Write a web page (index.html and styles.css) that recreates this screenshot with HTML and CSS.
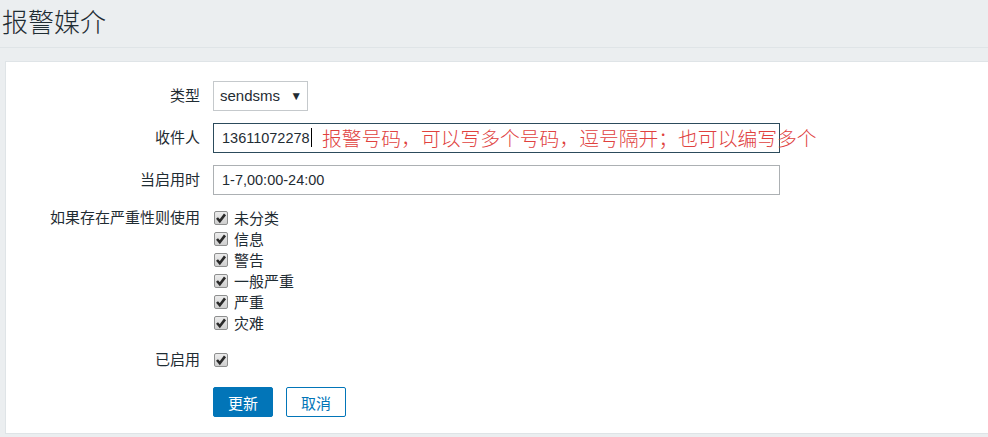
FILE: index.html
```html
<!DOCTYPE html>
<html lang="zh-CN">

<head>
    <meta charset="UTF-8">
    <title>报警媒介</title>
    <link rel="stylesheet" href="styles.css">
</head>

<body>
    <header class="header">
        <h1>报警媒介</h1>
    </header>

    <div class="panel">
        <form class="form" action="#" method="post">
            <label class="form-label">类型</label>
            <div class="form-field">
                <div class="select">sendsms <span class="select-arrow">▼</span></div>
            </div>

            <label class="form-label">收件人</label>
            <div class="form-field field-note">
                <div class="input input-focus">13611072278<span class="caret"></span></div>
                <!-- 截图上的红色批注 -->
                <span class="note">报警号码，可以写多个号码，逗号隔开；也可以编写多个</span>
            </div>

            <label class="form-label">当启用时</label>
            <div class="form-field">
                <div class="input">1-7,00:00-24:00</div>
            </div>

            <label class="form-label label-top">如果存在严重性则使用</label>
            <ul class="check-list">
                <li><span class="check"><svg viewBox="0 0 12 12"><path d="M2 6 L4.8 9.2 L10 2.4"/></svg></span>未分类</li>
                <li><span class="check"><svg viewBox="0 0 12 12"><path d="M2 6 L4.8 9.2 L10 2.4"/></svg></span>信息</li>
                <li><span class="check"><svg viewBox="0 0 12 12"><path d="M2 6 L4.8 9.2 L10 2.4"/></svg></span>警告</li>
                <li><span class="check"><svg viewBox="0 0 12 12"><path d="M2 6 L4.8 9.2 L10 2.4"/></svg></span>一般严重</li>
                <li><span class="check"><svg viewBox="0 0 12 12"><path d="M2 6 L4.8 9.2 L10 2.4"/></svg></span>严重</li>
                <li><span class="check"><svg viewBox="0 0 12 12"><path d="M2 6 L4.8 9.2 L10 2.4"/></svg></span>灾难</li>
            </ul>

            <label class="form-label">已启用</label>
            <div class="form-field">
                <span class="check"><svg viewBox="0 0 12 12"><path d="M2 6 L4.8 9.2 L10 2.4"/></svg></span>
            </div>

            <div></div>
            <div class="form-field buttons">
                <button type="submit" class="btn">更新</button>
                <button type="button" class="btn btn-alt">取消</button>
            </div>
        </form>
    </div>
</body>

</html>
```

FILE: styles.css
```css
body {
    margin: 0;
    padding: 0;
    background-color: #ebeef0;
    color: #1f2c33;
    font-family: "Liberation Sans", Arial, "Noto Sans CJK SC", sans-serif;
    font-size: 15px;
}

.header {
    height: 47px;
    border-bottom: 1px solid #dfe4e7;
    padding-left: 2px;
}

.header h1 {
    margin: 0;
    font-size: 26px;
    font-weight: 300;
    line-height: 47px;
}

.panel {
    margin: 13px 0 0 5px;
    height: 352px;
    padding-top: 19px;
    background-color: #fff;
    border: 1px solid #dfe4e7;
    border-right: none;
}

.form {
    display: grid;
    grid-template-columns: 194px 1fr;
    column-gap: 13px;
    row-gap: 12px;
}

.form-label {
    text-align: right;
    height: 30px;
    line-height: 30px;
}

.label-top {
    height: 21px;
    line-height: 21px;
}

.form-field {
    display: flex;
    align-items: center;
    height: 30px;
}

.field-note {
    position: relative;
}

.select {
    box-sizing: border-box;
    width: 95px;
    height: 30px;
    line-height: 28px;
    padding-left: 6px;
    border: 1px solid #c5c9cc;
    font-size: 15px;
}

.select-arrow {
    font-size: 12px;
    margin-left: 6px;
    vertical-align: 1px;
}

.input {
    box-sizing: border-box;
    width: 567px;
    height: 30px;
    line-height: 29px;
    padding-left: 8px;
    border: 1px solid #acb0b3;
    font-size: 14.5px;
    color: #1f2c33;
}

.input-focus {
    border-color: #2c4b5c;
}

.caret {
    display: inline-block;
    width: 1px;
    height: 19px;
    margin-left: 1px;
    background-color: #000;
    vertical-align: -4px;
}

/* 红色批注文字 */
.note {
    position: absolute;
    left: 109px;
    top: 2px;
    font-family: "Noto Sans CJK SC", sans-serif;
    font-size: 19.8px;
    font-weight: 300;
    line-height: 26px;
    color: #e0413e;
    white-space: nowrap;
}

.check-list {
    list-style: none;
    margin: 0;
    padding: 0;
}

.check-list li {
    display: flex;
    align-items: center;
    height: 21px;
}

.check {
    box-sizing: border-box;
    display: inline-flex;
    align-items: center;
    justify-content: center;
    width: 14px;
    height: 14px;
    margin: 0 6px 0 1px;
    border: 1px solid #8e8f8f;
    border-radius: 2px;
    background: linear-gradient(#ececec, #cfcfcf);
}

.check svg {
    width: 12px;
    height: 12px;
    fill: none;
    stroke: #2a2a2a;
    stroke-width: 2.6;
}

.buttons {
    gap: 13px;
}

.btn {
    box-sizing: border-box;
    width: 60px;
    height: 30px;
    padding: 0;
    border: 1px solid #0275b8;
    border-radius: 2px;
    background-color: #0275b8;
    color: #fff;
    font-family: "Liberation Sans", Arial, "Noto Sans CJK SC", sans-serif;
    font-size: 15px;
    cursor: pointer;
}

.btn-alt {
    background-color: #fff;
    color: #0275b8;
}
```
